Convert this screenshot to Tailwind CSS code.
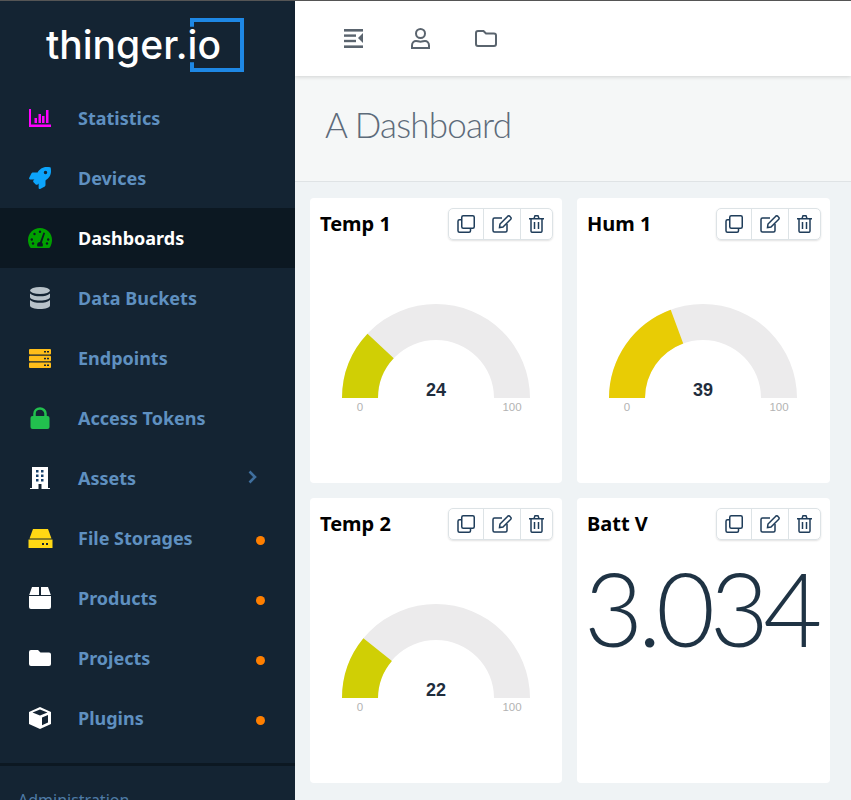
<!DOCTYPE html>
<html lang="en">

<head>
  <meta charset="UTF-8" />
  <title>A Dashboard - thinger.io</title>
  <script src="https://cdn.jsdelivr.net/npm/@tailwindcss/browser@4"></script>
</head>

<body class="w-[851px] h-[800px] overflow-hidden flex font-['Noto_Sans',sans-serif] bg-[#eff3f5] border-t border-[#555]">
  <!-- sidebar -->
  <aside class="w-[295px] h-[799px] shrink-0 bg-[#142433] flex flex-col overflow-hidden">
    <div class="h-[87px] shrink-0 relative">
      <span class="absolute left-[46px] top-[17px] text-[39px] leading-[54px] font-medium text-white font-['Inter',sans-serif]">thinger.io</span>
      <div class="absolute left-[190px] top-[17px] w-[54px] h-[54px] border-[4px] border-[#1e88e5] [clip-path:polygon(0_0,100%_0,100%_100%,0_100%,0_82%,10%_82%,10%_16%,0_16%)]"></div>
    </div>
    <nav class="flex flex-col text-[#5f90c0] text-[18px] font-bold">
      <a class="h-[60px] flex items-center">
        <svg class="w-[22px] h-[18px] ml-[29px] mr-[27px]" viewBox="0 0 22 18" fill="#f0f"><path d="M0 0h2v15.500h20V18H0z"/><rect x="5.500" y="9" width="2.500" height="5"/><rect x="9.500" y="5" width="2.500" height="9"/><rect x="13" y="7" width="2.500" height="7"/><rect x="17" y="1" width="2.500" height="13"/></svg>
        <span>Statistics</span>
      </a>
      <a class="h-[60px] flex items-center">
        <svg class="w-[22px] h-[22px] ml-[29px] mr-[27px]" viewBox="0 0 512 512" fill="#0ca4fb"><path d="M505.12 19.09c-1.19-5.53-6.66-11-12.21-12.19C460.72 0 435.51 0 410.41 0 307.18 0 245.27 55.2 199.05 128H94.84c-16.35.02-35.56 11.88-42.89 26.48L2.52 253.3A28.4 28.4 0 0 0 0 264a24 24 0 0 0 24 24h103.81l-22.47 22.47c-11.37 11.36-13 32.26 0 45.25l50.9 50.91c11.16 11.19 32.16 13.16 45.28 0L224 384.16V488a24 24 0 0 0 24 24 28.56 28.56 0 0 0 10.71-2.52l98.73-49.39c14.63-7.3 26.5-26.5 26.5-42.86V312.8c72.6-46.31 128.04-108.41 128.04-211.1.09-25.2.09-50.4-6.86-82.61zM384.04 168a40 40 0 1 1 40.01-40 40.02 40.02 0 0 1-40.01 40z"/></svg>
        <span>Devices</span>
      </a>
      <a class="h-[60px] flex items-center bg-[#0c1822] text-white">
        <svg class="w-[24px] h-[20px] ml-[28px] mr-[26px]" viewBox="0 0 24 20"><path fill="#00a000" d="M12 0C5.400 0 0 5.400 0 12c0 2.500.700 5 2 7.300.300.400.700.700 1.200.700h17.600c.500 0 .900-.300 1.200-.700 1.300-2.300 2-4.800 2-7.300C24 5.400 18.600 0 12 0z"/><g fill="#0c1822"><circle cx="12" cy="3.800" r="1.200"/><circle cx="6.500" cy="6" r="1.200"/><circle cx="3.800" cy="11.500" r="1.200"/><circle cx="20.200" cy="11.500" r="1.200"/><circle cx="5" cy="15.500" r="1.200"/><circle cx="19" cy="15.500" r="1.200"/><path d="M15.500 4.500l1.600.6-3.200 9.400c.800.800 1 1.500 1 2.500 0 .5-.1 1-.4 1.500H9.500c-.3-.5-.4-1-.4-1.500 0-1.700 1.300-3 2.900-3z"/></g></svg>
        <span>Dashboards</span>
      </a>
      <a class="h-[60px] flex items-center">
        <svg class="w-[20px] h-[22px] ml-[30px] mr-[28px]" viewBox="0 0 20 22" fill="#b8c2c9"><ellipse cx="10" cy="3.500" rx="10" ry="3.500"/><path d="M0 6.500c2 2 6 2.800 10 2.800s8-.8 10-2.800V10c0 2-4.500 3.500-10 3.500S0 12 0 10z"/><path d="M0 13c2 2 6 2.800 10 2.800S18 15 20 13v5.500c0 2-4.500 3.500-10 3.500S0 20.500 0 18.500z"/></svg>
        <span>Data Buckets</span>
      </a>
      <a class="h-[60px] flex items-center">
        <svg class="w-[22px] h-[19px] ml-[29px] mr-[27px]" viewBox="0 0 22 19"><g fill="#ffbe1a"><rect width="22" height="5.500" rx="1"/><rect y="6.700" width="22" height="5.600" rx="1"/><rect y="13.500" width="22" height="5.500" rx="1"/></g><g fill="#142433"><rect x="15" y="2" width="2" height="1.500"/><rect x="18" y="2" width="2" height="1.500"/><rect x="15" y="8.800" width="2" height="1.500"/><rect x="18" y="8.800" width="2" height="1.500"/><rect x="15" y="15.500" width="2" height="1.500"/><rect x="18" y="15.500" width="2" height="1.500"/></g></svg>
        <span>Endpoints</span>
      </a>
      <a class="h-[60px] flex items-center">
        <svg class="w-[20px] h-[22px] ml-[30px] mr-[28px]" viewBox="0 0 20 22"><path fill="none" stroke="#22c04e" stroke-width="2.500" d="M4.500 10V6.500a5.500 5 0 0 1 11 0V10"/><rect y="9" width="19" height="13" x="0.500" rx="2" fill="#22c04e"/></svg>
        <span>Access Tokens</span>
      </a>
      <a class="h-[60px] flex items-center relative">
        <svg class="w-[20px] h-[22px] ml-[30px] mr-[28px]" viewBox="0 0 20 22"><path fill="#fff" d="M2 0h16v21h2v1H0v-1h2z"/><g fill="#17406b"><rect x="6" y="3" width="2.500" height="2.500"/><rect x="11" y="3" width="2.500" height="2.500"/><rect x="6" y="7.500" width="2.500" height="2.500"/><rect x="11" y="7.500" width="2.500" height="2.500"/><rect x="6" y="12" width="2.500" height="2.500"/><rect x="11" y="12" width="2.500" height="2.500"/></g><rect x="8.500" y="17" width="3" height="5" fill="#142433"/></svg>
        <span>Assets</span>
        <svg class="absolute left-[248px] top-[22px] w-[9px] h-[14px]" viewBox="0 0 9 14"><path fill="none" stroke="#3f6f9e" stroke-width="2.600" d="M1.500 1.500 7 7l-5.500 5.500"/></svg>
      </a>
      <a class="h-[60px] flex items-center relative">
        <svg class="w-[25px] h-[19px] ml-[28px] mr-[25px]" viewBox="0 0 25 19"><path fill="#ffd814" d="M5 0h15l3.500 9.500h-22z"/><path fill="#ffd814" d="M0.500 10.500h24V19H0.500z"/><rect x="14" y="14" width="2" height="2" fill="#142433"/><rect x="18" y="14" width="2" height="2" fill="#142433"/></svg>
        <span>File Storages</span>
        <i class="absolute left-[256px] top-[28px] w-[9px] h-[9px] rounded-full bg-[#ff7f00]"></i>
      </a>
      <a class="h-[60px] flex items-center relative">
        <svg class="w-[22px] h-[22px] ml-[29px] mr-[27px]" viewBox="0 0 22 22" fill="#fff"><path d="M3 0h7v8H0.200zM12 0h7l2.800 8H12zM0 9h22v11a2 2 0 0 1-2 2H2a2 2 0 0 1-2-2z"/></svg>
        <span>Products</span>
        <i class="absolute left-[256px] top-[28px] w-[9px] h-[9px] rounded-full bg-[#ff7f00]"></i>
      </a>
      <a class="h-[60px] flex items-center relative">
        <svg class="w-[22px] h-[16px] ml-[29px] mr-[27px]" viewBox="0 0 22 16" fill="#fff"><path d="M2 0h7l2.500 2.500H20a2 2 0 0 1 2 2V14a2 2 0 0 1-2 2H2a2 2 0 0 1-2-2V2a2 2 0 0 1 2-2z"/></svg>
        <span>Projects</span>
        <i class="absolute left-[256px] top-[28px] w-[9px] h-[9px] rounded-full bg-[#ff7f00]"></i>
      </a>
      <a class="h-[60px] flex items-center relative">
        <svg class="w-[22px] h-[22px] ml-[29px] mr-[27px]" viewBox="0 0 22 22"><path fill="#fff" d="M11 0l11 5v12l-11 5L0 17V5z"/><path fill="#142433" d="M3.500 5.500 11 2.500l7.500 3L11 8.500zM13 10.500l6-2.500v7.500l-6 2.700z"/></svg>
        <span>Plugins</span>
        <i class="absolute left-[256px] top-[28px] w-[9px] h-[9px] rounded-full bg-[#ff7f00]"></i>
      </a>
    </nav>
    <div class="mt-[15px] pt-[24px] border-t-[3px] border-[#0c1822] pl-[18px] text-[16px] leading-5 text-[#4f7ba6]">Administration</div>
  </aside>

  <main class="flex-1 flex flex-col min-w-0">
    <header class="h-[75px] shrink-0 bg-white shadow-[0_1px_4px_rgba(0,0,0,0.15)] relative flex items-center text-[#5a646e]">
      <svg class="w-[19px] h-[19px] ml-[49px]" viewBox="0 0 19 19" fill="currentColor"><rect width="19" height="2.600"/><rect y="5.400" width="12" height="2.400"/><rect y="10.800" width="12" height="2.400"/><rect y="16.400" width="19" height="2.600"/><path d="M19 4v10l-5-5z"/></svg>
      <svg class="w-[19px] h-[21px] ml-[48px]" viewBox="0 0 19 21" fill="none" stroke="currentColor" stroke-width="2"><circle cx="9.500" cy="5.500" r="4.500"/><path d="M1 20v-2.500C1 14.500 3 13 5 13c1.500 0 2.500.700 4.500.700S12.500 13 14 13c2 0 4 1.500 4 4.500V20z"/></svg>
      <svg class="w-[22px] h-[17px] ml-[45px]" viewBox="0 0 22 17" fill="none" stroke="currentColor" stroke-width="2"><path d="M3 1h5.500l2.500 2.500h8A2 2 0 0 1 21 5.500V14a2 2 0 0 1-2 2H3a2 2 0 0 1-2-2V3a2 2 0 0 1 2-2z"/></svg>
    </header>

    <div class="h-[106px] shrink-0 bg-[#f5f7f7] border-b border-[#dfe3e5] flex items-center pl-[30px] pb-[8px]">
      <h1 class="text-[35px] tracking-[-0.800px] font-light text-[#5d6b7a] font-['Lato',sans-serif]">A Dashboard</h1>
    </div>

    <div class="grid grid-cols-[252px_253px] gap-[15px] pl-[15px] pt-[16px]">
      <!-- Temp 1 -->
      <section class="h-[285px] bg-white rounded-[4px] pl-[10px] pr-[9px] pt-[10px] flex flex-col">
        <div class="flex items-center justify-between h-[32px]">
          <h2 class="text-[20px] font-bold text-black">Temp 1</h2>
          <div class="flex h-[32px] border border-[#dde3e6] rounded-[5px] shadow-[0_1px_2px_rgba(0,0,0,0.12)] text-[#1f3d5a]">
            <span class="w-[35px] flex items-center justify-center border-r border-[#dde3e6]"><svg class="w-[18px] h-[18px]" viewBox="0 0 18 18" fill="none" stroke="currentColor" stroke-width="1.500"><rect x="4.750" y="0.750" width="12.500" height="12.500" rx="1.500"/><path d="M4.750 4.750H2.500a1.500 1.500 0 0 0-1.500 1.500v9.500a1.500 1.500 0 0 0 1.500 1.500h9.500a1.500 1.500 0 0 0 1.500-1.500v-2.500"/></svg></span>
            <span class="w-[37px] flex items-center justify-center border-r border-[#dde3e6]"><svg class="w-[20px] h-[18px]" viewBox="0 0 20 18" fill="none" stroke="currentColor" stroke-width="1.500"><path d="M10 3H2.500A1.500 1.500 0 0 0 1 4.500v11A1.500 1.500 0 0 0 2.500 17h11a1.500 1.500 0 0 0 1.500-1.500V9"/><path d="M7.500 12.500l.5-3.500 7.500-7.500a1.500 1.500 0 0 1 2.500 0l.5.500a1.500 1.500 0 0 1 0 2.500l-7.500 7.500z"/></svg></span>
            <span class="w-[31px] flex items-center justify-center"><svg class="w-[15px] h-[18px]" viewBox="0 0 15 18" fill="none" stroke="currentColor" stroke-width="1.500"><path d="M0 3.750h15M2 4v12a1.300 1.300 0 0 0 1.300 1.300h8.400A1.300 1.300 0 0 0 13 16V4M5 3.500 6 .8h3l1 2.700M5.500 7v7M9.500 7v7"/></svg></span>
          </div>
        </div>
        <svg class="w-[232px] h-[200px] mt-[8px] font-['Liberation_Sans',sans-serif]" viewBox="0 0 232 200">
          <path fill="#ecebec" d="M22 150a94 94 0 0 1 188 0h-36a58 58 0 0 0-116 0z"/>
          <path fill="#d0cf05" d="M22 150a94 94 0 0 1 25.500-64.300l26.200 24.500A58 58 0 0 0 58 150z"/>
          <text x="116" y="148" text-anchor="middle" font-size="18" font-weight="700" fill="#1f2d3d">24</text>
          <text x="40" y="163" text-anchor="middle" font-size="11.500" fill="#b3b3b3">0</text>
          <text x="192" y="163" text-anchor="middle" font-size="11.500" fill="#b3b3b3">100</text>
        </svg>
      </section>

      <!-- Hum 1 -->
      <section class="h-[285px] bg-white rounded-[4px] pl-[10px] pr-[9px] pt-[10px] flex flex-col">
        <div class="flex items-center justify-between h-[32px]">
          <h2 class="text-[20px] font-bold text-black">Hum 1</h2>
          <div class="flex h-[32px] border border-[#dde3e6] rounded-[5px] shadow-[0_1px_2px_rgba(0,0,0,0.12)] text-[#1f3d5a]">
            <span class="w-[35px] flex items-center justify-center border-r border-[#dde3e6]"><svg class="w-[18px] h-[18px]" viewBox="0 0 18 18" fill="none" stroke="currentColor" stroke-width="1.500"><rect x="4.750" y="0.750" width="12.500" height="12.500" rx="1.500"/><path d="M4.750 4.750H2.500a1.500 1.500 0 0 0-1.500 1.500v9.500a1.500 1.500 0 0 0 1.500 1.500h9.500a1.500 1.500 0 0 0 1.500-1.500v-2.500"/></svg></span>
            <span class="w-[37px] flex items-center justify-center border-r border-[#dde3e6]"><svg class="w-[20px] h-[18px]" viewBox="0 0 20 18" fill="none" stroke="currentColor" stroke-width="1.500"><path d="M10 3H2.500A1.500 1.500 0 0 0 1 4.500v11A1.500 1.500 0 0 0 2.500 17h11a1.500 1.500 0 0 0 1.500-1.500V9"/><path d="M7.500 12.500l.5-3.500 7.500-7.500a1.500 1.500 0 0 1 2.500 0l.5.500a1.500 1.500 0 0 1 0 2.500l-7.500 7.500z"/></svg></span>
            <span class="w-[31px] flex items-center justify-center"><svg class="w-[15px] h-[18px]" viewBox="0 0 15 18" fill="none" stroke="currentColor" stroke-width="1.500"><path d="M0 3.750h15M2 4v12a1.300 1.300 0 0 0 1.300 1.300h8.400A1.300 1.300 0 0 0 13 16V4M5 3.500 6 .8h3l1 2.700M5.500 7v7M9.500 7v7"/></svg></span>
          </div>
        </div>
        <svg class="w-[232px] h-[200px] mt-[8px] font-['Liberation_Sans',sans-serif]" viewBox="0 0 232 200">
          <path fill="#ecebec" d="M22 150a94 94 0 0 1 188 0h-36a58 58 0 0 0-116 0z"/>
          <path fill="#e8cc05" d="M22 150a94 94 0 0 1 61.700-88.300l12.500 33.800A58 58 0 0 0 58 150z"/>
          <text x="116" y="148" text-anchor="middle" font-size="18" font-weight="700" fill="#1f2d3d">39</text>
          <text x="40" y="163" text-anchor="middle" font-size="11.500" fill="#b3b3b3">0</text>
          <text x="192" y="163" text-anchor="middle" font-size="11.500" fill="#b3b3b3">100</text>
        </svg>
      </section>

      <!-- Temp 2 -->
      <section class="h-[285px] bg-white rounded-[4px] pl-[10px] pr-[9px] pt-[10px] flex flex-col">
        <div class="flex items-center justify-between h-[32px]">
          <h2 class="text-[20px] font-bold text-black">Temp 2</h2>
          <div class="flex h-[32px] border border-[#dde3e6] rounded-[5px] shadow-[0_1px_2px_rgba(0,0,0,0.12)] text-[#1f3d5a]">
            <span class="w-[35px] flex items-center justify-center border-r border-[#dde3e6]"><svg class="w-[18px] h-[18px]" viewBox="0 0 18 18" fill="none" stroke="currentColor" stroke-width="1.500"><rect x="4.750" y="0.750" width="12.500" height="12.500" rx="1.500"/><path d="M4.750 4.750H2.500a1.500 1.500 0 0 0-1.500 1.500v9.500a1.500 1.500 0 0 0 1.500 1.500h9.500a1.500 1.500 0 0 0 1.500-1.500v-2.500"/></svg></span>
            <span class="w-[37px] flex items-center justify-center border-r border-[#dde3e6]"><svg class="w-[20px] h-[18px]" viewBox="0 0 20 18" fill="none" stroke="currentColor" stroke-width="1.500"><path d="M10 3H2.500A1.500 1.500 0 0 0 1 4.500v11A1.500 1.500 0 0 0 2.500 17h11a1.500 1.500 0 0 0 1.500-1.500V9"/><path d="M7.500 12.500l.5-3.500 7.500-7.500a1.500 1.500 0 0 1 2.500 0l.5.500a1.500 1.500 0 0 1 0 2.500l-7.500 7.500z"/></svg></span>
            <span class="w-[31px] flex items-center justify-center"><svg class="w-[15px] h-[18px]" viewBox="0 0 15 18" fill="none" stroke="currentColor" stroke-width="1.500"><path d="M0 3.750h15M2 4v12a1.300 1.300 0 0 0 1.300 1.300h8.400A1.300 1.300 0 0 0 13 16V4M5 3.500 6 .8h3l1 2.700M5.500 7v7M9.500 7v7"/></svg></span>
          </div>
        </div>
        <svg class="w-[232px] h-[200px] mt-[8px] font-['Liberation_Sans',sans-serif]" viewBox="0 0 232 200">
          <path fill="#ecebec" d="M22 150a94 94 0 0 1 188 0h-36a58 58 0 0 0-116 0z"/>
          <path fill="#d0cf05" d="M22 150a94 94 0 0 1 21.400-59.800l28.500 22.900A58 58 0 0 0 58 150z"/>
          <text x="116" y="148" text-anchor="middle" font-size="18" font-weight="700" fill="#1f2d3d">22</text>
          <text x="40" y="163" text-anchor="middle" font-size="11.500" fill="#b3b3b3">0</text>
          <text x="192" y="163" text-anchor="middle" font-size="11.500" fill="#b3b3b3">100</text>
        </svg>
      </section>

      <!-- Batt V -->
      <section class="h-[285px] bg-white rounded-[4px] pl-[10px] pr-[9px] pt-[10px] flex flex-col">
        <div class="flex items-center justify-between h-[32px]">
          <h2 class="text-[20px] font-bold text-black">Batt V</h2>
          <div class="flex h-[32px] border border-[#dde3e6] rounded-[5px] shadow-[0_1px_2px_rgba(0,0,0,0.12)] text-[#1f3d5a]">
            <span class="w-[35px] flex items-center justify-center border-r border-[#dde3e6]"><svg class="w-[18px] h-[18px]" viewBox="0 0 18 18" fill="none" stroke="currentColor" stroke-width="1.500"><rect x="4.750" y="0.750" width="12.500" height="12.500" rx="1.500"/><path d="M4.750 4.750H2.500a1.500 1.500 0 0 0-1.500 1.500v9.500a1.500 1.500 0 0 0 1.500 1.500h9.500a1.500 1.500 0 0 0 1.500-1.500v-2.500"/></svg></span>
            <span class="w-[37px] flex items-center justify-center border-r border-[#dde3e6]"><svg class="w-[20px] h-[18px]" viewBox="0 0 20 18" fill="none" stroke="currentColor" stroke-width="1.500"><path d="M10 3H2.500A1.500 1.500 0 0 0 1 4.500v11A1.500 1.500 0 0 0 2.500 17h11a1.500 1.500 0 0 0 1.500-1.500V9"/><path d="M7.500 12.500l.5-3.500 7.500-7.500a1.500 1.500 0 0 1 2.500 0l.5.500a1.500 1.500 0 0 1 0 2.500l-7.500 7.500z"/></svg></span>
            <span class="w-[31px] flex items-center justify-center"><svg class="w-[15px] h-[18px]" viewBox="0 0 15 18" fill="none" stroke="currentColor" stroke-width="1.500"><path d="M0 3.750h15M2 4v12a1.300 1.300 0 0 0 1.300 1.300h8.400A1.300 1.300 0 0 0 13 16V4M5 3.500 6 .8h3l1 2.700M5.500 7v7M9.500 7v7"/></svg></span>
          </div>
        </div>
        <div class="text-[102px] leading-[120px] tracking-[-5.500px] font-light text-[#1f3344] font-['Lato',sans-serif] mt-[8px] -ml-[3px] whitespace-nowrap">3.034</div>
      </section>
    </div>
  </main>
</body>

</html>
